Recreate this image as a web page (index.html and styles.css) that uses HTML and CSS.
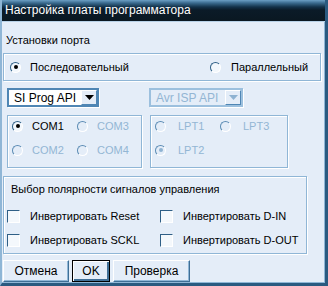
FILE: index.html
```html
<!DOCTYPE html>
<html lang="ru">
<head>
  <meta charset="UTF-8">
  <title>Настройка платы программатора</title>
  <link rel="stylesheet" href="styles.css">
</head>
<body>
  <div class="window">
    <div class="titlebar">Настройка платы программатора</div>
    <div class="body">
      <div class="caption">Установки порта</div>
      <div class="group port">
        <label class="opt serial"><span class="radio on"></span>Последовательный</label>
        <label class="opt parallel"><span class="radio"></span>Параллельный</label>
      </div>

      <div class="selects">
        <div class="combo">
          <span class="value">SI Prog API</span>
          <span class="drop"><svg width="9" height="5" viewBox="0 0 9 5"><path d="M0 0h9L4.5 5z" fill="#000"/></svg></span>
        </div>
        <div class="combo off">
          <span class="value">Avr ISP API</span>
          <span class="drop"><svg width="9" height="5" viewBox="0 0 9 5"><path d="M0 0h9L4.5 5z" fill="#8fb3d2"/></svg></span>
        </div>
      </div>

      <div class="ports">
        <div class="group com">
          <label class="opt"><span class="radio on"></span>COM1</label>
          <label class="opt off"><span class="radio"></span>COM3</label>
          <label class="opt off"><span class="radio"></span>COM2</label>
          <label class="opt off"><span class="radio"></span>COM4</label>
        </div>
        <div class="group lpt">
          <label class="opt off"><span class="radio"></span>LPT1</label>
          <label class="opt off"><span class="radio"></span>LPT3</label>
          <label class="opt off"><span class="radio on"></span>LPT2</label>
        </div>
      </div>

      <div class="group polarity">
        <div class="caption">Выбор полярности сигналов управления</div>
        <div class="checks">
          <label class="chk"><span class="box"></span>Инвертировать Reset</label>
          <label class="chk"><span class="box"></span>Инвертировать D-IN</label>
          <label class="chk"><span class="box"></span>Инвертировать SCKL</label>
          <label class="chk"><span class="box"></span>Инвертировать D-OUT</label>
        </div>
      </div>

      <div class="buttons">
        <button class="btn cancel">Отмена</button>
        <button class="btn ok">OK</button>
        <button class="btn check">Проверка</button>
      </div>
    </div>
  </div>
</body>
</html>
```

FILE: styles.css
```css
body {
  margin: 0;
  font-family: 'Liberation Sans', Arial, sans-serif;
  font-size: 11px;
  color: #000;
  background: #e4edf8;
}
.window {
  width: 328px;
  height: 286px;
  box-sizing: border-box;
  background: #e4edf8;
  border-right: 3px solid #2a5a80;
  border-bottom: 3px solid #2a5a80;
  border-left: 2px solid #8fb6d6;
  box-shadow: inset -1px -1px 0 #8fb6d6;
  display: flex;
  flex-direction: column;
  overflow: hidden;
}
.titlebar {
  height: 21px;
  margin-left: -2px;
  margin-right: -3px;
  border-top-right-radius: 3px;
  border-bottom: 1px solid #b8d2e8;
  background: linear-gradient(#6c9fc4 0, #3a6a8e 3px, #123048 7px, #0b1b28 10px, #0a1822 20px);
  color: #fff;
  font-size: 12px;
  line-height: 21px;
  padding-left: 5px;
}
.body {
  flex: 1;
  padding: 0 0 0 1px;
  display: flex;
  flex-direction: column;
}
.caption {
  height: 14px;
  line-height: 14px;
  padding-left: 3px;
  margin-top: 11px;
}
.group {
  border: 1px solid #8fb6d6;
  box-shadow: 1px 1px 0 #fff, inset 1px 1px 0 #fff;
  box-sizing: border-box;
}
.port {
  margin-top: 6px;
  width: 318px;
  height: 28px;
  display: flex;
  align-items: center;
}
.opt {
  display: flex;
  align-items: center;
  height: 14px;
  white-space: nowrap;
}
.opt.off {
  color: #93b6d4;
}
.serial {
  margin-left: 6px;
  width: 200px;
}
.radio {
  width: 11px;
  height: 11px;
  border-radius: 50%;
  box-sizing: border-box;
  border: 1px solid;
  border-color: #2f5f86 #ffffff #ffffff #2f5f86;
  background: #f2f7fc;
  margin-right: 9px;
  position: relative;
  flex: none;
}
.radio.on::after {
  content: "";
  position: absolute;
  left: 2.5px;
  top: 2.5px;
  width: 4px;
  height: 4px;
  border-radius: 50%;
  background: #000;
}
.parallel .radio {
  margin-right: 10px;
}
.off .radio {
  border-color: #5c8cb4 #ffffff #ffffff #5c8cb4;
  background: #e4edf8;
}
.off .radio.on::after {
  background: #8fb3d2;
}
.selects {
  display: flex;
  gap: 50px;
  margin-top: 7px;
  padding-left: 4px;
}
.combo {
  width: 92px;
  height: 19px;
  box-sizing: border-box;
  border: 2px solid #4f86b4;
  box-shadow: 1px 1px 0 #fff;
  background: #fff;
  display: flex;
  align-items: center;
  justify-content: space-between;
  font-size: 12px;
}
.combo .value {
  padding-left: 5px;
}
.combo .drop {
  width: 16px;
  height: 15px;
  box-sizing: border-box;
  border: 1px solid #4f86b4;
  border-top-color: #fff;
  border-left-color: #fff;
  background: #e4edf8;
  display: flex;
  align-items: center;
  justify-content: center;
}
.combo.off {
  width: 94px;
  border-color: #9cc0de;
  background: #e4edf8;
  color: #93b6d4;
}
.combo.off .drop {
  border-color: #fff #4f86b4 #4f86b4 #fff;
}
.ports {
  display: flex;
  gap: 8px;
  margin-top: 8px;
  padding-left: 4px;
}
.ports .group {
  height: 53px;
  display: grid;
  grid-template-columns: 65px auto;
  grid-auto-rows: 24px;
  align-content: center;
  padding-left: 4px;
  padding-top: 3px;
}
.com {
  width: 135px;
}
.lpt {
  width: 138px;
  grid-template-columns: 67px auto;
}
.lpt .radio {
  margin-right: 12px;
}
.polarity {
  margin-top: 8px;
  width: 304px;
  height: 78px;
  padding-left: 3px;
}
.polarity .caption {
  margin-top: 5px;
  padding-left: 4px;
}
.checks {
  display: grid;
  grid-template-columns: 153px auto;
  grid-auto-rows: 24px;
  margin-top: 13px;
}
.chk {
  display: flex;
  align-items: center;
  height: 14px;
  white-space: nowrap;
}
.box {
  width: 13px;
  height: 13px;
  box-sizing: border-box;
  border: 1px solid;
  border-color: #2f5f86 #ffffff #ffffff #2f5f86;
  background: #f4f8fc;
  margin-right: 10px;
  flex: none;
}
.buttons {
  display: flex;
  gap: 3px;
  margin-top: 6px;
}
.btn {
  height: 22px;
  font-family: inherit;
  font-size: 12px;
  background: #e4edf8;
  border: 1px solid;
  border-color: #ffffff #3f6f96 #3f6f96 #ffffff;
  box-shadow: inset -1px -1px 0 #8fb6d6;
  padding: 0;
  color: #000;
}
.cancel {
  width: 66px;
}
.ok {
  width: 38px;
  border: 1px solid #000;
  box-shadow: inset 1px 1px 0 #fff, inset -2px -2px 0 #3f6f96;
}
.check {
  width: 77px;
}
```
